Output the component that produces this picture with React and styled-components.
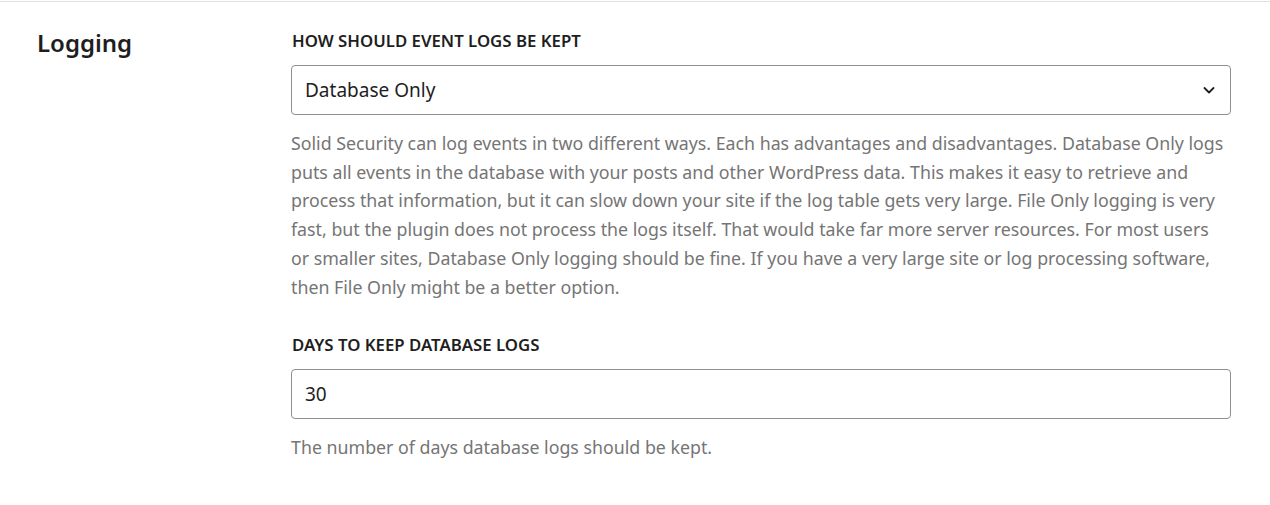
import styled, { createGlobalStyle } from 'styled-components';

const GlobalStyle = createGlobalStyle`
  html, body {
    margin: 0;
    padding: 0;
    background: #fff;
  }
  body {
    font-family: "Noto Sans", "Open Sans", sans-serif;
    color: #1e1e1e;
  }
  * {
    box-sizing: border-box;
  }
`;

const Section = styled.section`
  border-top: 1px solid #e0e0e0;
  margin-top: 1px;
  display: grid;
  grid-template-columns: 291px 940px;
  padding: 24px 0 40px;
`;

const SectionTitle = styled.h2`
  margin: -1px 0 0;
  padding-left: 37px;
  font-size: 24px;
  font-weight: 600;
  line-height: 36px;
  color: #1e1e1e;
`;

const Fields = styled.div`
  display: flex;
  flex-direction: column;
`;

const Field = styled.div`
  display: flex;
  flex-direction: column;
  margin-bottom: ${p => p.$gap || 0}px;
`;

const Label = styled.label`
  font-size: 16.8px;
  font-weight: 600;
  text-transform: uppercase;
  line-height: 20px;
  color: #1e1e1e;
  margin: 5px 0 14px 1px;
`;

const SelectBox = styled.div`
  height: 50px;
  border: 1px solid #8c8f94;
  border-radius: 4px;
  display: flex;
  align-items: center;
  padding: 0 13px 0 13px;
  font-size: 19px;
  color: #1e1e1e;
  background: #fff;
`;

const Chevron = styled.svg`
  margin-left: auto;
  width: 16px;
  height: 16px;
`;

const Input = styled.input`
  height: 50px;
  border: 1px solid #8c8f94;
  border-radius: 4px;
  padding: 0 13px;
  font-family: inherit;
  font-size: 19px;
  color: #1e1e1e;
  background: #fff;
  outline: none;
`;

const Help = styled.p`
  margin: 14px 0 0;
  font-size: 17.8px;
  line-height: 28.7px;
  color: #757575;
`;

export default function App() {
  return (
    <>
      <GlobalStyle />
      <Section>
        <SectionTitle>Logging</SectionTitle>
        <Fields>
          <Field $gap={29}>
            <Label>How should event logs be kept</Label>
            <SelectBox>
              Database Only
              <Chevron viewBox="0 0 16 16" fill="none">
                <path d="M3.5 6l4.5 4.5L12.5 6" stroke="#1e1e1e" strokeWidth="1.8" strokeLinecap="round" strokeLinejoin="round" />
              </Chevron>
            </SelectBox>
            <Help>
              Solid Security can log events in two different ways. Each has advantages and disadvantages. Database Only logs puts all events in the database with your posts and other WordPress data. This makes it easy to retrieve and process that information, but it can slow down your site if the log table gets very large. File Only logging is very fast, but the plugin does not process the logs itself. That would take far more server resources. For most users or smaller sites, Database Only logging should be fine. If you have a very large site or log processing software, then File Only might be a better option.
            </Help>
          </Field>
          <Field>
            <Label>Days to keep database logs</Label>
            <Input defaultValue="30" readOnly />
            <Help>The number of days database logs should be kept.</Help>
          </Field>
        </Fields>
      </Section>
    </>
  );
}
